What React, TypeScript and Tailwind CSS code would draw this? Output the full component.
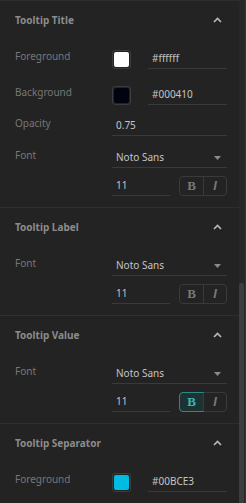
import type { ReactNode } from 'react'

const FONT = { fontFamily: '"Noto Sans", "Open Sans", sans-serif' }

function ChevronUp() {
  return (
    <svg width="9" height="6" viewBox="0 0 9 6" className="shrink-0">
      <path d="M1 5 L4.5 1.5 L8 5" fill="none" stroke="#b8b8b8" strokeWidth="1.7" />
    </svg>
  )
}

function Caret() {
  return (
    <svg width="7" height="4" viewBox="0 0 7 4">
      <path d="M0 0 L7 0 L3.5 4 Z" fill="#8a8a8a" />
    </svg>
  )
}

function Section({ title, children }: { title: string; children: ReactNode }) {
  return (
    <div className="border-b border-[#2f2f2f] pl-[15px] pr-[12px] pb-[11px]">
      <div className="h-[38px] flex items-center justify-between pr-[5px]">
        <span className="text-[10px] font-bold text-[#8c8c8c]">{title}</span>
        <ChevronUp />
      </div>
      <div className="flex flex-col">{children}</div>
    </div>
  )
}

function Row({ label, mt, children }: { label?: string; mt: string; children: ReactNode }) {
  return (
    <div className={`flex items-start ${mt}`}>
      <div className="w-[97px] shrink-0 text-[10px] leading-[14px] text-[#777777]">{label}</div>
      <div className="flex-1 flex items-center">{children}</div>
    </div>
  )
}

function Field({ value, className = '' }: { value: string; className?: string }) {
  return (
    <div className={`h-[20px] border-b border-[#3a3a3a] pl-[4px] flex items-center text-[10px] text-[#c4c4c4] ${className}`}>
      {value}
    </div>
  )
}

function ColorRow({ label, color, hex, mt }: { label: string; color: string; hex: string; mt: string }) {
  return (
    <Row label={label} mt={mt}>
      <div className="w-[19px] h-[19px] rounded-[3px] border border-[#3c3c3c] p-[1px] shrink-0">
        <div className="w-full h-full rounded-[2px]" style={{ background: color }} />
      </div>
      <Field value={hex} className="ml-[17px] flex-1" />
    </Row>
  )
}

function FontRows({ mt, bold = false }: { mt: string; bold?: boolean }) {
  return (
    <>
      <Row label="Font" mt={mt}>
        <div className="flex-1 h-[20px] border-b border-[#3a3a3a] pl-[4px] pr-[6px] flex items-center justify-between text-[10px] text-[#c4c4c4]">
          <span>Noto Sans</span>
          <Caret />
        </div>
      </Row>
      <Row mt="mt-[8px]">
        <Field value="11" className="w-[58px]" />
        <div className="ml-auto flex h-[20px] w-[48px] rounded-[4px] border border-[#3a3a3a]">
          <div
            className={`w-1/2 flex items-center justify-center text-[13px] font-bold rounded-l-[3px] ${
              bold ? 'bg-[#1d3333] text-[#3fb3b3] outline outline-1 outline-[#2a8a8a]' : 'text-[#787878]'
            }`}
            style={{ fontFamily: '"Liberation Serif", serif' }}
          >
            B
          </div>
          <div
            className="w-1/2 flex items-center justify-center text-[13px] font-bold italic text-[#787878] border-l border-[#3a3a3a]"
            style={{ fontFamily: '"Liberation Sans", sans-serif' }}
          >
            I
          </div>
        </div>
      </Row>
    </>
  )
}

export default function App() {
  return (
    <div className="w-[246px] h-[503px] bg-[#232323] flex overflow-hidden select-none" style={FONT}>
      <div className="w-[239px] shrink-0 border-t border-[#2e2e2e]">
        <Section title="Tooltip Title">
          <ColorRow label="Foreground" color="#ffffff" hex="#ffffff" mt="mt-[10px]" />
          <ColorRow label="Background" color="#000410" hex="#000410" mt="mt-[16px]" />
          <Row label="Opacity" mt="mt-[11px]">
            <Field value="0.75" className="flex-1" />
          </Row>
          <FontRows mt="mt-[12px]" />
        </Section>
        <Section title="Tooltip Label">
          <FontRows mt="mt-[10px]" />
        </Section>
        <Section title="Tooltip Value">
          <FontRows mt="mt-[10px]" bold />
        </Section>
        <Section title="Tooltip Separator">
          <ColorRow label="Foreground" color="#00BCE3" hex="#00BCE3" mt="mt-[10px]" />
        </Section>
      </div>
      <div className="flex-1 bg-[#272727] border-r border-[#353535] flex flex-col">
        <div className="h-[283px] shrink-0" />
        <div className="flex-1 w-[5px] bg-[#3d3d3d] rounded-t-[2px]" />
      </div>
    </div>
  )
}
